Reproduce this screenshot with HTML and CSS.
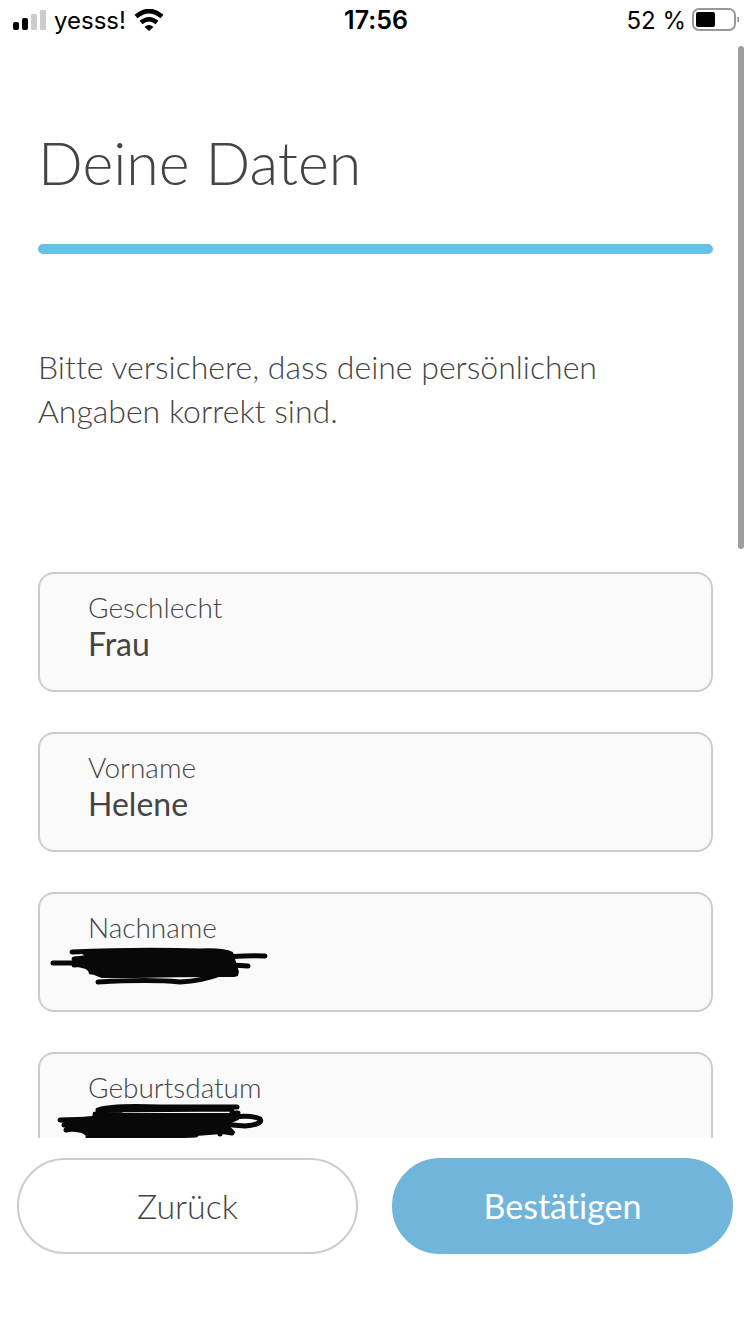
FILE: index.html
```
<!DOCTYPE html>
<html lang="de">
<head>
  <meta charset="UTF-8" />
  <meta name="viewport" content="width=device-width, initial-scale=1.0"/>
  <title>Deine Daten</title>
  <link rel="stylesheet" href="styles.css">
</head>
<body>

  <header class="status-bar">
    <div class="status-left">
      <svg class="signal" width="34" height="20" viewBox="0 0 34 20">
        <rect x="1" y="12" width="6" height="8" rx="2" fill="#000"/>
        <rect x="10" y="8" width="6" height="12" rx="2" fill="#000"/>
        <rect x="19" y="4" width="6" height="16" rx="1" fill="#ccc"/>
        <rect x="28" y="0" width="6" height="20" rx="1" fill="#ccc"/>
      </svg>
      <span>yesss!</span>
      <svg class="wifi" width="30" height="22" viewBox="0 0 30 22">
        <path d="M2 7.5Q15-3.5 28 7.5M7 13.5Q15 7 23 13.5" fill="none" stroke="#000" stroke-width="4.6"/>
        <path d="M10.5 18Q15 14 19.5 18L15 22Z" fill="#000"/>
      </svg>
    </div>
    <span class="status-time">17:56</span>
    <div class="status-right">
      <span>52 %</span>
      <svg width="48" height="24" viewBox="0 0 48 24">
        <rect x="1" y="1" width="42" height="21" rx="6" fill="none" stroke="#999" stroke-width="2"/>
        <rect x="4" y="4" width="19" height="15" rx="2" fill="#000"/>
        <path d="M46 9Q47 11 46 14Z" fill="#888" stroke="#888"/>
      </svg>
    </div>
  </header>

  <main class="content">
    <h1>Deine Daten</h1>
    <div class="progress"></div>
    <p class="intro">Bitte versichere, dass deine persönlichen Angaben korrekt sind.</p>

    <form class="fields" id="data-form">
      <div class="field">
        <label for="gender">Geschlecht</label>
        <input type="text" id="gender" value="Frau" readonly />
      </div>
      <div class="field">
        <label for="first-name">Vorname</label>
        <input type="text" id="first-name" value="Helene" readonly />
      </div>
      <div class="field">
        <label for="last-name">Nachname</label>
        <input type="text" id="last-name" readonly />
        <svg class="scribble" width="220" height="40" viewBox="0 0 220 40">
          <path class="blob" d="M32 6Q100 3 180 7L184 13L188 26L184 30L166 30Q125 30 84 31L52 31L42 27L36 22L24 19L30 14L24 12L36 10Z"/>
          <path d="M22 6Q90 3 150 5Q174 4 181 8M3 17H30M24 13L50 12M160 13Q190 9 215 10M24 19Q90 12 198 20M41 26Q110 19 186 28M48 36Q100 33 130 36Q152 35 170 28"/>
        </svg>
      </div>
      <div class="field">
        <label for="birth-date">Geburtsdatum</label>
        <input type="text" id="birth-date" readonly />
        <svg class="scribble" width="220" height="40" viewBox="0 4 220 40">
          <path class="blob" d="M46 12L80 12L182 12L188 17L176 22L184 30L146 33L90 35L38 34L32 30L20 28L28 22L10 19L42 15Z"/>
          <path d="M48 8Q62 3 110 5L187 5M54 8L182 7M10 18L44 17M14 23H40M16 28Q70 18 150 26L182 31M45 12L70 11M38 35L100 35L146 33M182 11H188M174 16Q201 12 210 17Q214 22 195 24L170 22M170 27V32"/>
        </svg>
      </div>
    </form>

    <div class="scroll-thumb"></div>
  </main>

  <footer class="actions">
    <button type="button" class="back-button">Zurück</button>
    <button type="submit" form="data-form" class="confirm-button">Bestätigen</button>
  </footer>

</body>
</html>
```
FILE: styles.css
```
* {
  box-sizing: border-box;
}
body {
  margin: 0;
  height: 100vh;
  display: flex;
  flex-direction: column;
  background-color: #fff;
  color: #444;
  font-family: Lato, sans-serif;
  font-weight: 300;
  font-variant-ligatures: none;
}
.status-bar {
  display: grid;
  grid-template-columns: 1fr auto 1fr;
  align-items: center;
  height: 40px;
  padding: 0 10px 0 12px;
  color: #000;
  font-family: Inter, sans-serif;
  font-size: 24px;
  font-weight: 400;
}
.status-left, .status-right {
  display: flex;
  align-items: center;
  gap: 8px;
}
.status-right {
  justify-content: flex-end;
  gap: 6px;
}
.status-time {
  font-size: 25px;
  font-weight: 600;
}
.content {
  position: relative;
  flex: 1;
  min-height: 0;
  overflow: hidden;
  padding: 88px 37px 0 38px;
}
h1 {
  margin: 0;
  font-size: 59px;
  font-weight: 300;
  line-height: 70px;
}
.progress {
  height: 10px;
  margin-top: 46px;
  border-radius: 5px;
  background-color: #69c0e6;
}
.intro {
  margin: 91px 0 0;
  font-size: 32px;
  line-height: 44px;
}
.fields {
  display: flex;
  flex-direction: column;
  gap: 40px;
  margin-top: 139px;
}
.field {
  position: relative;
  height: 120px;
  padding: 15px 48px;
  border: 2px solid #ccc;
  border-radius: 16px;
  background-color: #fafafa;
}
.field label {
  display: block;
  font-size: 28px;
  line-height: 36px;
}
.field input {
  display: block;
  width: 100%;
  height: 36px;
  padding: 0;
  border: none;
  outline: none;
  background: none;
  color: #444;
  font-family: inherit;
  font-size: 32px;
  font-weight: 400;
}
.scribble {
  position: absolute;
  left: 10px;
  top: 52px;
  overflow: visible;
  fill: none;
  stroke: #080808;
  stroke-width: 5;
  stroke-linecap: round;
  stroke-linejoin: round;
}
.scribble .blob {
  fill: #080808;
  stroke-width: 2;
}
.scroll-thumb {
  position: absolute;
  top: 6px;
  right: 6px;
  width: 6px;
  height: 503px;
  border-radius: 3px;
  background-color: #9d9d9d;
}
.actions {
  display: flex;
  gap: 34px;
  padding: 20px 17px 80px;
}
.actions button {
  flex: 1;
  height: 96px;
  padding: 0 0 2px;
  border: 2px solid #ccc;
  border-radius: 48px;
  background-color: #fff;
  color: #444;
  cursor: pointer;
  font-family: inherit;
  font-size: 34px;
  font-weight: 300;
  font-variant-ligatures: none;
}
.actions .confirm-button {
  border-color: #72b5da;
  background-color: #72b5da;
  color: #fff;
  font-weight: 400;
}
```
